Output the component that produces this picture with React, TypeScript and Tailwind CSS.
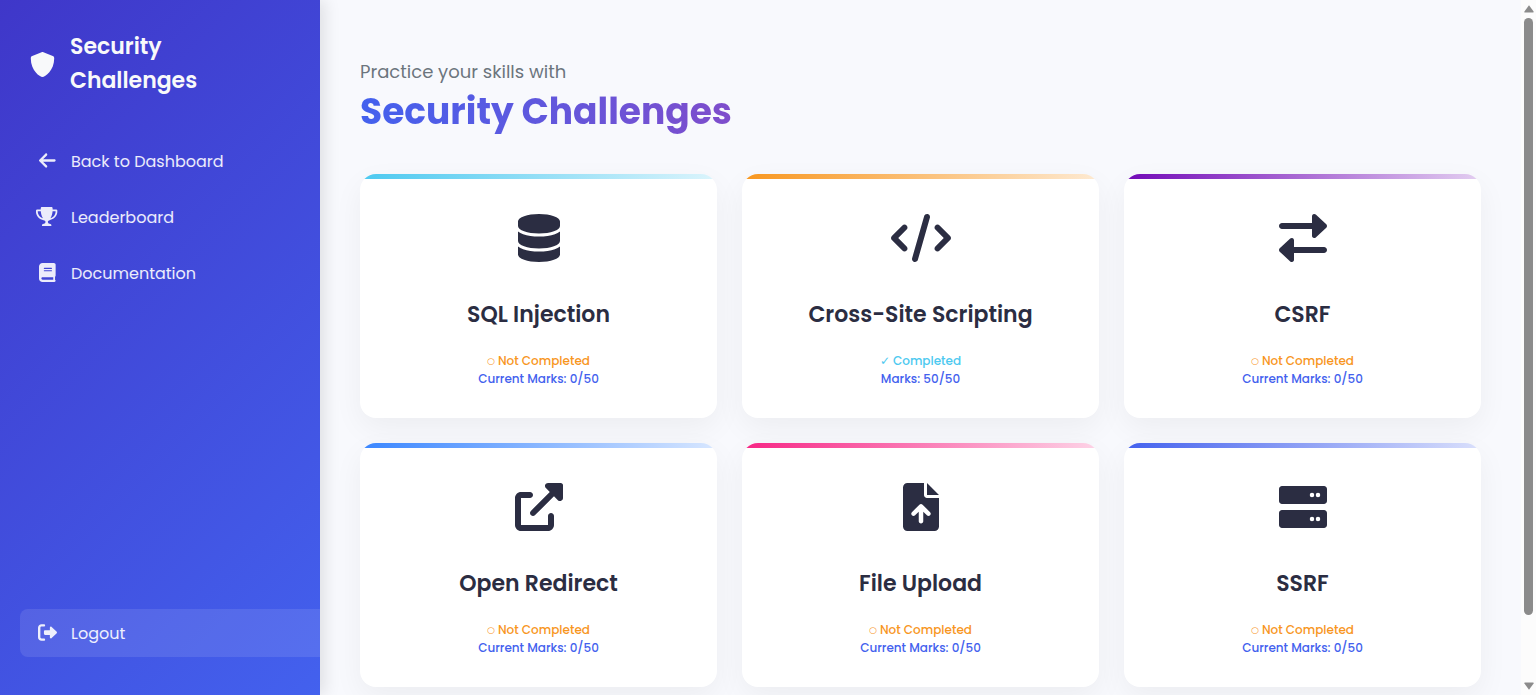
type IconShape = { width: number; path: string };

const icons = {
  shield: {
    width: 512,
    path: "M496 128C496 381.3 309.1 512 256 512C204.9 512 16 385.3 16 128c0-19.4 11.7-36.9 29.6-44.3l192-80C242.500 1.700 250.700 0 256 0c5.300 0 13.600 1.700 18.500 3.700l192 80C484.300 91.100 496 108.600 496 128z",
  },
  arrowLeft: {
    width: 448,
    path: "M9.400 233.400c-12.500 12.500-12.500 32.800 0 45.300l160 160c12.500 12.500 32.800 12.500 45.300 0s12.500-32.800 0-45.300L109.200 288 416 288c17.700 0 32-14.300 32-32s-14.300-32-32-32l-306.700 0L214.600 118.600c12.500-12.500 12.500-32.800 0-45.300s-32.800-12.500-45.300 0l-160 160z",
  },
  trophy: {
    width: 576,
    path: "M572.100 82.380C569.500 71.590 559.800 64 548.700 64h-100.800c.24-12.450 .11-23.700-.16-33.020C447.300 13.630 433.200 0 415.800 0H160.200C142.800 0 128.700 13.630 128.200 30.980C128 40.300 127.800 51.550 128.100 64H27.260C16.160 64 6.540 71.590 3.910 82.380C3.100 85.780-15.710 167.200 37.070 245.900c37.440 55.820 100.600 95.030 187.500 117.400c18.700 4.800 31.410 22.060 31.410 41.370C256 428.500 236.500 448 212.600 448H208c-26.510 0-48 21.490-48 48c0 8.840 7.160 16 16 16h224c8.840 0 16-7.160 16-16c0-26.510-21.490-48-48-48h-4.640c-23.860 0-43.360-19.500-43.360-43.350c0-19.310 12.710-36.570 31.410-41.370c86.960-22.340 150.100-61.550 187.500-117.400C591.700 167.200 572.900 85.780 572.100 82.380zM77.410 219.800C49.470 178.600 47.010 135.700 48.380 112h80.390c5.360 59.620 20.350 131.100 57.670 189.100C137.400 281.600 100.900 254.400 77.410 219.800zM498.600 219.800c-23.440 34.600-59.940 61.790-109 81.220C426.900 243.100 441.900 171.600 447.200 112h80.390C529 135.700 526.500 178.700 498.600 219.800z",
  },
  book: {
    width: 448,
    path: "M448 336v-288C448 21.490 426.500 0 400 0H96C42.980 0 0 42.980 0 96v320c0 53.020 42.980 96 96 96h320c17.670 0 32-14.330 32-32c0-11.720-6.600-21.500-16-27.100v-81.360C441.800 362.800 448 350.200 448 336zM144 128h192C344.800 128 352 135.200 352 144C352 152.800 344.800 160 336 160H144C135.200 160 128 152.800 128 144C128 135.200 135.200 128 144 128zM144 192h192C344.800 192 352 199.200 352 208C352 216.800 344.800 224 336 224H144C135.200 224 128 216.800 128 208C128 199.200 135.200 192 144 192zM384 448H96c-17.670 0-32-14.330-32-32c0-17.670 14.330-32 32-32h288V448z",
  },
  logout: {
    width: 512,
    path: "M96 480h64C177.700 480 192 465.700 192 448S177.700 416 160 416H96c-17.670 0-32-14.330-32-32V128c0-17.670 14.330-32 32-32h64C177.700 96 192 81.670 192 64S177.700 32 160 32H96C42.980 32 0 74.980 0 128v256C0 437 42.980 480 96 480zM504.800 238.500l-144.100-136c-7-6.600-17.200-8.400-26-4.600c-8.800 3.800-14.500 12.500-14.500 22.100l-.1 72l-128 0c-17.700 0-32 14.300-32 32v64c0 17.700 14.300 32 32 32l128 0l.1 72c0 9.600 5.700 18.200 14.500 22c8.800 3.800 19 2 26-4.600l144.100-136C514.400 264.400 514.400 247.600 504.800 238.500z",
  },
  database: {
    width: 448,
    path: "M448 80V128C448 172.200 347.700 208 224 208C100.300 208 0 172.200 0 128V80C0 35.820 100.300 0 224 0C347.700 0 448 35.820 448 80zM393.200 214.700C413.100 207.300 433.100 197.800 448 186.100V288C448 332.200 347.700 368 224 368C100.300 368 0 332.200 0 288V186.100C14.930 197.800 34.020 207.300 54.850 214.700C99.660 230.700 159.500 240 224 240C288.500 240 348.300 230.700 393.200 214.700zM54.850 374.700C99.660 390.700 159.500 400 224 400C288.500 400 348.300 390.700 393.200 374.700C413.100 367.300 433.100 357.800 448 346.100V432C448 476.200 347.700 512 224 512C100.300 512 0 476.200 0 432V346.100C14.930 357.800 34.020 367.300 54.850 374.700z",
  },
  code: {
    width: 640,
    path: "M414.800 40.790L286.800 488.800C281.900 505.800 264.200 515.600 247.200 510.800C230.200 505.900 220.400 488.200 225.200 471.200L353.200 23.210C358.100 6.220 375.800-3.620 392.800 1.230C409.800 6.090 419.600 23.800 414.800 40.790zM518.600 121.400L630.600 233.400C643.100 245.900 643.100 266.100 630.600 278.600L518.600 390.600C506.100 403.100 485.900 403.100 473.400 390.600C460.900 378.100 460.900 357.900 473.400 345.400L562.700 256L473.400 166.600C460.900 154.100 460.900 133.900 473.400 121.400C485.900 108.900 506.100 108.900 518.600 121.400zM166.600 166.600L77.250 256L166.600 345.400C179.100 357.900 179.100 378.100 166.600 390.600C154.100 403.100 133.900 403.100 121.400 390.600L9.370 278.600C-3.120 266.100-3.120 245.900 9.370 233.400L121.400 121.400C133.900 108.900 154.100 108.900 166.600 121.400C179.100 133.900 179.100 154.100 166.600 166.600z",
  },
  exchange: {
    width: 512,
    path: "M32 160h320v72c0 9.500 5.600 18.200 14.400 22c8.800 3.800 18.900 2.100 25.900-4.400l112-104c10.200-9.500 10.200-25.700 0-35.200l-112-104c-7-6.500-17.200-8.200-25.900-4.400c-8.800 3.800-14.400 12.500-14.400 22V96H32C14.300 96 0 110.300 0 128S14.300 160 32 160zM480 352H160V280c0-9.500-5.600-18.200-14.400-22C136.900 254.200 126.700 255.900 119.700 262.400l-112 104c-10.200 9.500-10.200 25.700 0 35.200l112 104c7 6.500 17.200 8.200 25.900 4.400C154.400 506.200 160 497.500 160 488V416H480c17.700 0 32-14.300 32-32S497.700 352 480 352z",
  },
  external: {
    width: 512,
    path: "M384 320c-17.670 0-32 14.330-32 32v96H64V160h96c17.670 0 32-14.320 32-32s-14.330-32-32-32L64 96c-35.350 0-64 28.650-64 64V448c0 35.340 28.650 64 64 64h288c35.350 0 64-28.660 64-64v-96C416 334.300 401.700 320 384 320zM488 0H352c-12.940 0-24.620 7.800-29.560 19.750c-4.970 11.970-2.220 25.720 6.940 34.880L370.800 96L169.400 297.400c-12.500 12.500-12.500 32.750 0 45.250C175.600 348.900 183.800 352 192 352s16.380-3.120 22.620-9.370L416 141.300l41.380 41.380c9.160 9.140 22.880 11.840 34.880 6.940C504.200 184.600 512 172.900 512 160V24C512 10.740 501.300 0 488 0z",
  },
  fileUpload: {
    width: 384,
    path: "M256 0v128h128L256 0zM224 128L224 0H48C21.490 0 0 21.490 0 48v416C0 490.500 21.490 512 48 512h288c26.510 0 48-21.490 48-48V160h-128C238.300 160 224 145.700 224 128zM289 345C284.300 349.700 278.200 352 272 352s-12.280-2.340-16.970-7.030L216 305.900V408c0 13.250-10.750 24-24 24s-24-10.750-24-24V305.900l-39.030 39.030c-9.380 9.380-24.560 9.380-33.940 0s-9.380-24.560 0-33.940l80-80c9.380-9.380 24.560-9.380 33.940 0l80 80C298.300 320.400 298.300 335.600 289 345z",
  },
  server: {
    width: 512,
    path: "M480 32H32C14.300 32 0 46.300 0 64v128c0 17.700 14.300 32 32 32h448c17.700 0 32-14.300 32-32V64C512 46.300 497.700 32 480 32zM352 152a24 24 0 1 1 0-48a24 24 0 1 1 0 48zM416 152a24 24 0 1 1 0-48a24 24 0 1 1 0 48zM480 288H32c-17.700 0-32 14.300-32 32v128c0 17.700 14.300 32 32 32h448c17.700 0 32-14.300 32-32V320C512 302.300 497.700 288 480 288zM352 408a24 24 0 1 1 0-48a24 24 0 1 1 0 48zM416 408a24 24 0 1 1 0-48a24 24 0 1 1 0 48z",
  },
} satisfies Record<string, IconShape>;

type IconName = keyof typeof icons;

function Icon({ name, className }: { name: IconName; className: string }) {
  const { width, path } = icons[name];
  return (
    <svg
      viewBox={`0 0 ${width} 512`}
      className={`w-auto shrink-0 overflow-visible ${className}`}
      fill="currentColor"
      fillRule="evenodd"
      aria-hidden="true"
    >
      <path d={path} />
    </svg>
  );
}

type Challenge = {
  title: string;
  icon: IconName;
  bar: string;
  completed: boolean;
};

const challenges: Challenge[] = [
  { title: "SQL Injection", icon: "database", bar: "from-[#4cc9f0] to-[#4cc9f0]/20", completed: false },
  { title: "Cross-Site Scripting", icon: "code", bar: "from-[#f8961e] to-[#f8961e]/20", completed: true },
  { title: "CSRF", icon: "exchange", bar: "from-[#7209b7] to-[#7209b7]/20", completed: false },
  { title: "Open Redirect", icon: "external", bar: "from-[#3a86ff] to-[#3a86ff]/20", completed: false },
  { title: "File Upload", icon: "fileUpload", bar: "from-[#f72585] to-[#f72585]/20", completed: false },
  { title: "SSRF", icon: "server", bar: "from-[#4361ee] to-[#4361ee]/20", completed: false },
];

function NavItem({ icon, label, active = false }: { icon: IconName; label: string; active?: boolean }) {
  return (
    <a
      href="#"
      className={`flex h-12 items-center gap-3 rounded-l-lg pl-[15px] text-base text-white/90 ${active ? "bg-white/10" : ""}`}
    >
      <span className="flex w-6 justify-center pb-0.5">
        <Icon name={icon} className="h-[19px]" />
      </span>
      <span className="pt-0.5">{label}</span>
    </a>
  );
}

function Sidebar() {
  return (
    <aside className="z-10 flex w-80 shrink-0 flex-col bg-linear-135/srgb from-[#3f37c9] to-[#4361ee] pb-[38px] pl-5 shadow-[5px_0_15px_rgba(0,0,0,0.1)]">
      <div className="flex items-center gap-[15px] pt-[30px] pl-[10px] text-[#f8f9fa]">
        <Icon name="shield" className="h-[25px]" />
        <span className="w-40 text-[22px] leading-[34px] font-semibold">Security Challenges</span>
      </div>
      <nav className="mt-[39px] flex grow flex-col gap-2">
        <NavItem icon="arrowLeft" label="Back to Dashboard" />
        <NavItem icon="trophy" label="Leaderboard" />
        <NavItem icon="book" label="Documentation" />
      </nav>
      <NavItem icon="logout" label="Logout" active />
    </aside>
  );
}

function ChallengeCard({ title, icon, bar, completed }: Challenge) {
  return (
    <a
      href="#"
      className="flex flex-col items-center overflow-hidden rounded-2xl bg-white pb-[30px] text-center shadow-[0_10px_30px_rgba(0,0,0,0.05)]"
    >
      <span className={`h-[5px] w-full bg-linear-to-r/srgb ${bar}`} />
      <Icon name={icon} className="mt-[35px] h-12 text-[#2b2d42]" />
      <h3 className="mt-[37px] text-[22px] leading-8 font-semibold text-[#2b2d42]">{title}</h3>
      <p
        className={`mt-[21px] flex items-center gap-[3px] text-xs leading-[18px] font-medium ${completed ? "text-[#4cc9f0]" : "text-[#f8961e]"}`}
      >
        {completed ? (
          <span className="font-[DejaVu_Sans,sans-serif] text-xs leading-[18px] font-normal">✓</span>
        ) : (
          <span className="font-[DejaVu_Sans,sans-serif] text-[9px] leading-[18px] font-bold">○</span>
        )}
        <span>{completed ? "Completed" : "Not Completed"}</span>
      </p>
      <p className="text-xs leading-[18px] font-medium text-[#4361ee]">
        {completed ? "Marks: 50/50" : "Current Marks: 0/50"}
      </p>
    </a>
  );
}

function ScrollTrack() {
  return (
    <div className="flex w-[15px] shrink-0 flex-col items-center bg-[#fcfcfc] py-[5px]" aria-hidden="true">
      <svg width="10" height="8" viewBox="0 0 10 8" fill="#8b8b8b">
        <path d="M5 0.3 9.6 6.6Q10 7.6 9 7.6H1Q0 7.6 .4 6.6Z" />
      </svg>
      <div className="mt-[5px] mb-[67px] w-[9px] grow rounded-full bg-[#8b8b8b]" />
      <svg width="10" height="8" viewBox="0 0 10 8" fill="#8b8b8b">
        <path d="M5 7.7 9.6 1.4Q10 .4 9 .4H1Q0 .4 .4 1.4Z" />
      </svg>
    </div>
  );
}

export default function App() {
  return (
    <div className="flex h-screen overflow-hidden bg-[#f8f9fd] font-[Poppins,Inter,sans-serif]">
      <Sidebar />
      <main className="min-w-0 grow overflow-y-auto px-10 pt-[58px] pb-10 [scrollbar-width:none]">
        <p className="text-lg leading-7 text-[#6c757d]">Practice your skills with</p>
        <h1 className="bg-linear-to-r/srgb from-[#4361ee] to-[#f72585] bg-clip-text text-[36px] leading-[52px] font-bold text-transparent">
          Security Challenges
        </h1>
        <div className="mt-[36px] grid grid-cols-3 gap-[25px]">
          {challenges.map((challenge) => (
            <ChallengeCard key={challenge.title} {...challenge} />
          ))}
        </div>
      </main>
      <ScrollTrack />
    </div>
  );
}
